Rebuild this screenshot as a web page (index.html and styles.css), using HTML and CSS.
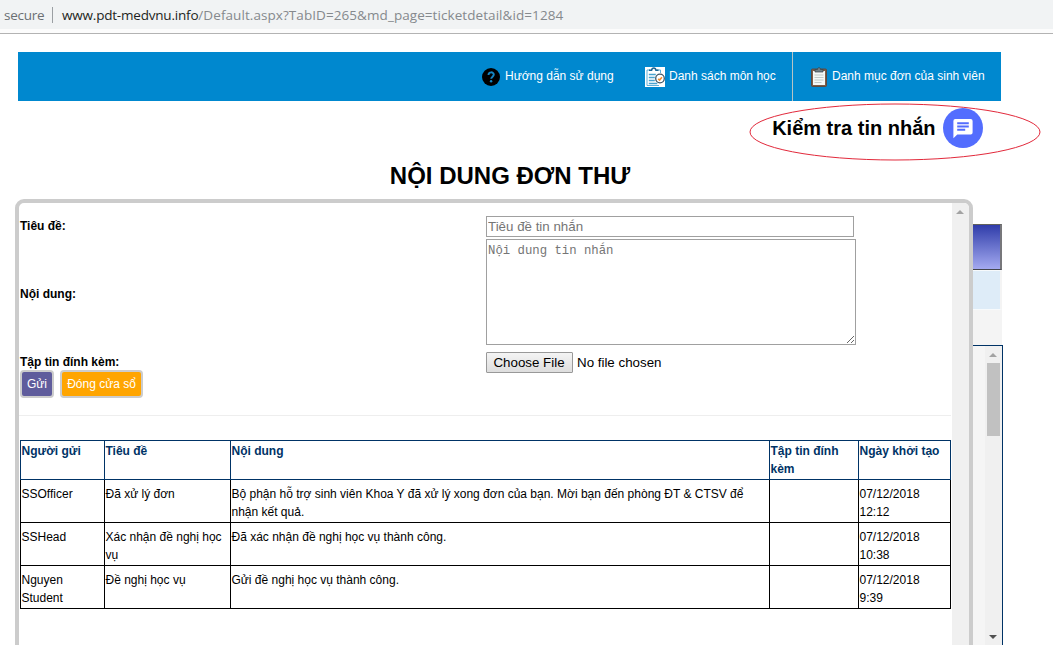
FILE: index.html
```html
<!DOCTYPE html>
<html lang="vi">
<head>
<meta charset="utf-8">
<title>Nội dung đơn thư</title>
<link rel="stylesheet" href="styles.css">
</head>
<body>
<div class="urlbar"><span class="secure">secure</span><span class="sep"></span><span class="host">www.pdt-medvnu.info</span><span class="path">/Default.aspx?TabID=265&amp;md_page=ticketdetail&amp;id=1284</span></div>

<nav class="nav">
  <a class="item help">
    <svg class="icon-help" viewBox="0 0 18 18"><circle cx="9" cy="9" r="9" fill="#000"/><path d="M6.500 7c0-3.600 5.300-3.400 5.300-.4 0 2-2.600 2.100-2.600 4.200" fill="none" stroke="#1486c4" stroke-width="1.900"/><circle cx="9.100" cy="13.300" r="1.200" fill="#1486c4"/></svg>
    <span>Hướng dẫn sử dụng</span>
  </a>
  <a class="item list">
    <svg class="icon-list" viewBox="0 0 20 20"><path fill="#fff" d="M0 0h20v20H0z"/><path d="M5 3H2v15.500h12M12 3h3.500v3" fill="none" stroke="#5fb0d8" stroke-width="1"/><path d="M4 3.300h2.500Q7 1 8.800 1T11 3.300h2.500" fill="none" stroke="#1b6594" stroke-width="1.600"/><path d="M3.800 7.500h7M3.800 10.500h6M3.800 13.500h6M3.800 16.500h8.500" stroke="#4aa3cf" stroke-width="1.300"/><circle cx="15" cy="11.500" r="4.300" fill="#fff" stroke="#3f5666" stroke-width="1.300"/><path d="m13.200 11.800 1.400 1.300 2.300-2.800" fill="none" stroke="#f18b2c" stroke-width="1.600"/></svg>
    <span>Danh sách môn học</span>
  </a>
  <a class="item forms">
    <svg class="icon-clip" viewBox="0 0 16 20"><rect x=".5" y="2" width="15" height="17.500" rx="1" fill="#7d5c47" stroke="#5c4a40"/><path fill="#f4f8f7" d="M2 4h12v14H2z"/><path d="M3.500 8h9M3.500 10.500h9M3.500 13h9M3.500 15.500h7" stroke="#b4bebd" stroke-width=".8"/><path d="M4 5V2.500h2.500C6.500 0 9.500 0 9.500 2.500H12V5z" fill="#718087" stroke="#37434a" stroke-width=".7"/></svg>
    <span>Danh mục đơn của sinh viên</span>
  </a>
</nav>

<div class="inbox">
  <span class="inbox-text">Kiểm tra tin nhắn</span>
  <svg class="icon-chat" viewBox="0 0 40 40"><circle cx="20" cy="20" r="20" fill="#536dfe"/><path fill="#fff" d="M12.300 11h15.400q1.900 0 1.900 1.900v11.600q0 1.900-1.900 1.900H14.300l-3.900 3.800V12.900q0-1.900 1.900-1.900z"/><path d="M14.200 15.300h11.600M14.200 18.500h11.600M14.200 21.700h8" stroke="#536dfe" stroke-width="1.900"/></svg>
  <svg class="ring" viewBox="0 0 292 58"><ellipse cx="146" cy="29" rx="145" ry="28" fill="none" stroke="#e2293b" stroke-width="1"/></svg>
</div>

<h1 class="title"><span>NỘI DUNG ĐƠN THƯ</span></h1>

<main class="stage">
  <div class="back">
    <div class="back-head"></div>
    <div class="back-row"></div>
    <div class="back-gap"></div>
    <div class="back-box">
      <div class="back-scroll">
        <svg class="arrow" viewBox="0 0 8 4"><path d="M4 0l4 4H0z" fill="#a3a3a3"/></svg>
        <div class="thumb"></div>
        <svg class="arrow down" viewBox="0 0 8 4"><path d="M0 0h8L4 4z" fill="#505050"/></svg>
      </div>
    </div>
  </div>

  <section class="modal">
    <div class="content">
      <form class="form">
        <label class="up">Tiêu đề:</label>
        <input class="subject" type="text" placeholder="Tiêu đề tin nhắn">
        <label class="up">Nội dung:</label>
        <textarea class="body" placeholder="Nội dung tin nhắn"></textarea>
        <label class="low">Tập tin đính kèm:</label>
        <div class="file"><span class="choose">Choose File</span><span class="nofile">No file chosen</span></div>
      </form>
      <div class="actions"><button class="btn send">Gửi</button><button class="btn close">Đóng cửa sổ</button></div>
      <hr>
      <table class="log">
        <colgroup><col class="c1"><col class="c2"><col class="c3"><col class="c4"><col class="c5"></colgroup>
        <thead><tr><th>Người gửi</th><th>Tiêu đề</th><th>Nội dung</th><th>Tập tin đính kèm</th><th>Ngày khởi tạo</th></tr></thead>
        <tbody>
          <tr><td>SSOfficer</td><td>Đã xử lý đơn</td><td>Bộ phận hỗ trợ sinh viên Khoa Y đã xử lý xong đơn của bạn. Mời bạn đến phòng ĐT &amp; CTSV để<br>nhận kết quả.</td><td></td><td>07/12/2018<br>12:12</td></tr>
          <tr><td>SSHead</td><td>Xác nhận đề nghị học<br>vụ</td><td>Đã xác nhận đề nghị học vụ thành công.</td><td></td><td>07/12/2018<br>10:38</td></tr>
          <tr><td>Nguyen<br>Student</td><td>Đề nghị học vụ</td><td>Gửi đề nghị học vụ thành công.</td><td></td><td>07/12/2018<br>9:39</td></tr>
        </tbody>
      </table>
    </div>
    <div class="scroll"><svg class="arrow" viewBox="0 0 8 4"><path d="M4 0l4 4H0z" fill="#a3a3a3"/></svg></div>
  </section>
</main>
</body>
</html>
```

FILE: styles.css
```css
* { box-sizing: border-box; }
html, body { height: 100%; }
body {
  margin: 0;
  overflow: hidden;
  display: flex;
  flex-direction: column;
  background: #fff;
  color: #000;
  font-family: "Liberation Sans", Arial, sans-serif;
  font-size: 12px;
}
svg { display: block; flex: none; }

.urlbar {
  flex: none;
  height: 34px;
  padding: 1px 0 4px 4px;
  display: flex;
  align-items: center;
  border-bottom: 1px solid #b3b3b3;
  background: linear-gradient(#f1f3f4 29px, #fcfcfc 29px);
  font: 13.5px/28px "Open Sans", "Noto Sans", sans-serif;
  white-space: nowrap;
}
.secure { width: 48px; color: #6b6f73; letter-spacing: -0.25px; }
.sep { width: 1px; height: 16px; margin-right: 9px; background: #9b9fa3; }
.host { color: #1d1f22; letter-spacing: -0.2px; }
.path { color: #85898d; letter-spacing: 0.07px; }

.nav {
  flex: none;
  height: 49px;
  width: 983px;
  margin: 18px 0 0 18px;
  display: flex;
  justify-content: flex-end;
  background: #0088cf;
  color: #fff;
}
.item { display: flex; align-items: center; white-space: nowrap; }
.item span { padding-bottom: 2px; }
.help { width: 163px; }
.list { width: 147px; }
.forms { width: 209px; border-left: 1px solid #b8c4c4; padding-left: 18px; }
.icon-help { width: 18px; height: 18px; margin-right: 5px; }
.icon-list { width: 20px; height: 20px; margin-right: 4px; }
.icon-clip { width: 16px; height: 20px; margin-right: 5px; }

.inbox {
  position: relative;
  flex: none;
  height: 54px;
  padding: 0 70px 0 0;
  display: flex;
  align-items: center;
  justify-content: flex-end;
}
.inbox-text { font-size: 20px; font-weight: bold; margin-right: 7.500px; white-space: nowrap; }
.icon-chat { width: 40px; height: 40px; }
.ring { position: absolute; left: 749px; top: 2px; width: 292px; height: 58px; }

.title {
  flex: none;
  height: 44px;
  margin: 0;
  padding-top: 7px;
  width: 1020px;
  text-align: center;
  font-size: 24px;
  line-height: 27px;
}

.stage { position: relative; flex: 1; min-height: 0; }
.back {
  width: 1003px;
  height: 446px;
  padding: 25px 0 0 900px;
  display: flex;
  flex-direction: column;
}
.back-head {
  height: 46px;
  width: 102px;
  border: 1px solid #44464c;
  border-top-color: #62625c;
  border-right: 2px solid #77777b;
  background: linear-gradient(#303daa, #a4aaf0);
}
.back-row { height: 40px; width: 102px; border: 1px solid #f7fafc; border-right: 2px solid #f4f4f4; background: #deecf8; }
.back-gap { height: 35px; width: 102px; background: #f4f4f4; }
.back-box {
  flex: 1;
  border-top: 1px solid #003366;
  border-right: 1px solid #003366;
  background: #f5f5f5;
  display: flex;
  justify-content: flex-end;
}
.back-scroll {
  width: 17px;
  padding: 7px 2px 6px 1px;
  display: flex;
  flex-direction: column;
  align-items: center;
  background: #f0f0f0;
}
.arrow { width: 8px; height: 4px; }
.thumb { width: 13px; height: 73px; margin-top: 6px; background: #c1c1c1; }
.down { margin-top: auto; }

.modal {
  position: absolute;
  left: 15px;
  top: 0;
  width: 958px;
  height: 470px;
  border: 4px solid #ccc;
  border-radius: 9px;
  background: #fff;
  display: flex;
  overflow: hidden;
}
.content { width: 933px; padding: 12px 1px 0 1px; }
.scroll { width: 17px; padding: 7px 0 0 4px; background: #f0f0f0; }

.form {
  display: grid;
  grid-template-columns: 466px 1fr;
  grid-template-rows: 24px 112px 19px;
}
.form label { align-self: center; font-weight: bold; line-height: 14px; }
.form .up { padding-bottom: 2px; }
.form .low { padding-top: 2px; }
.subject, .body { border: 1px solid #a0a0a0; border-radius: 0; margin: 0; padding: 1px; background: #fff; outline: none; }
.subject { width: 368px; height: 21px; margin-top: 1px; font: 13.33px "Liberation Sans", Arial, sans-serif; }
.body { width: 370px; height: 106px; padding: 3px 1px; font: 12.300px/17px "Liberation Mono", monospace; resize: both; }
.subject::placeholder, .body::placeholder { color: #757575; }
.file { display: flex; height: 21px; margin-top: 1px; align-items: center; font-size: 13.33px; white-space: nowrap; }
.choose {
  width: 87px;
  height: 21px;
  margin-right: 4px;
  padding-right: 1px;
  border: 1px solid #999;
  border-radius: 1px;
  background: linear-gradient(#f4f4f4, #dedede);
  text-align: center;
  line-height: 19px;
}
.actions { display: flex; gap: 6px; }
.btn {
  height: 28px;
  padding: 0;
  border: 2px solid #ccc;
  border-radius: 4px;
  color: #fff;
  font: 12px "Liberation Sans", Arial, sans-serif;
}
.send { width: 34px; background: #5f5c9c; }
.close { width: 83px; background: #ffa500; }
hr { height: 1px; margin: 17px 0 24px -1px; border: 0; background: #eee; }

.log { width: 931px; table-layout: fixed; border-collapse: collapse; line-height: 18px; }
.c1 { width: 84px; }
.c2 { width: 126px; }
.c3 { width: 539px; }
.c4 { width: 89px; }
.c5 { width: 92px; }
.log th, .log td { border: 1px solid #000; text-align: left; vertical-align: top; }
.log td { height: 43px; padding: 5px 0 1px 0.500px; white-space: nowrap; }
.log th { height: 39px; padding: 1px 0 0 0.500px; border-color: #003366; color: #003366; }
```
